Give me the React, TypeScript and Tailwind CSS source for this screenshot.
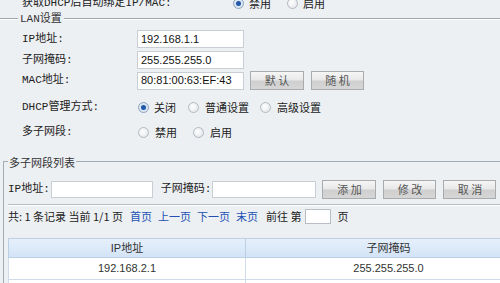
import React from "react";

const LBL = "font-['Liberation_Mono','Noto_Sans_CJK_SC',monospace]";
const SANS = "font-['Liberation_Sans','Noto_Sans_CJK_SC',sans-serif]";
const CJK = "font-['Noto_Sans_CJK_SC',sans-serif]";

function Radio({ checked }: { checked?: boolean }) {
  return checked ? (
    <span className="inline-flex w-[11px] h-[11px] shrink-0 items-center justify-center rounded-full border border-[#8ea3bd] bg-[#dbe6f3]">
      <span className="w-[5px] h-[5px] rounded-full bg-[#1f58a8]" />
    </span>
  ) : (
    <span className="inline-flex w-[11px] h-[11px] shrink-0 rounded-full border border-[#b3b9c0] bg-[radial-gradient(circle_at_40%_40%,#ffffff,#dde1e6)]" />
  );
}

function Btn({ children, w }: { children: React.ReactNode; w: string }) {
  return (
    <div
      className={`${w} h-[19px] shrink-0 flex items-center justify-center border border-[#a9abad] bg-[linear-gradient(#f6f6f6_0%,#e8e8e8_48%,#cfcfcf_52%,#d6d6d6_100%)] text-[11px] text-[#555] ${CJK}`}
    >
      {children}
    </div>
  );
}

function Input({ value, w, h }: { value?: string; w: string; h: string }) {
  return (
    <div
      className={`${w} ${h} shrink-0 flex items-center border border-[#c9ced4] bg-white px-[3px] text-[11px] text-[#111] ${SANS}`}
    >
      {value}
    </div>
  );
}

export default function App() {
  return (
    <div className="w-[500px] h-[283px] overflow-hidden bg-[#edf0f3] text-[#222]">
      {/* top row (clipped by the top edge as in the original) */}
      <div className={`-mt-[5px] h-[16px] flex items-center pl-[22px] text-[11px] ${LBL}`}>
        <span className="w-[211px] shrink-0 whitespace-nowrap">获取DHCP后自动绑定IP/MAC:</span>
        <Radio checked />
        <span className={`ml-[5px] w-[38px] shrink-0 ${CJK}`}>禁用</span>
        <Radio />
        <span className={`ml-[5px] ${CJK}`}>启用</span>
      </div>

      {/* LAN legend */}
      <div className="mt-[1px] h-[14px] flex items-center">
        <div className="w-[18px] h-[2px] border-t border-[#a0a7af] bg-white" />
        <span className={`px-[2px] text-[11px] text-[#333] ${LBL}`}>LAN设置</span>
        <div className="flex-1 h-[2px] border-t border-[#a0a7af] bg-white" />
      </div>

      {/* form rows */}
      <div className={`mt-[4px] h-[18px] flex items-center pl-[22px] text-[11px] ${LBL}`}>
        <span className="w-[115px] shrink-0">IP地址:</span>
        <Input value="192.168.1.1" w="w-[107px]" h="h-[18px]" />
      </div>
      <div className={`mt-[3px] h-[18px] flex items-center pl-[22px] text-[11px] ${LBL}`}>
        <span className="w-[115px] shrink-0">子网掩码:</span>
        <Input value="255.255.255.0" w="w-[107px]" h="h-[18px]" />
      </div>
      <div className={`mt-[2px] h-[19px] flex items-center pl-[22px] text-[11px] ${LBL}`}>
        <span className="w-[115px] shrink-0">MAC地址:</span>
        <Input value="80:81:00:63:EF:43" w="w-[107px]" h="h-[18px]" />
        <div className="ml-[6px]">
          <Btn w="w-[54px]">默 认</Btn>
        </div>
        <div className="ml-[7px]">
          <Btn w="w-[53px]">随 机</Btn>
        </div>
      </div>
      <div className={`mt-[7px] h-[20px] flex items-center pl-[22px] text-[11px] ${LBL}`}>
        <span className="w-[116px] shrink-0">DHCP管理方式:</span>
        <Radio checked />
        <span className={`ml-[5px] w-[34px] shrink-0 ${CJK}`}>关闭</span>
        <Radio />
        <span className={`ml-[6px] w-[55px] shrink-0 ${CJK}`}>普通设置</span>
        <Radio />
        <span className={`ml-[6px] ${CJK}`}>高级设置</span>
      </div>
      <div className={`mt-[5px] h-[20px] flex items-center pl-[22px] text-[11px] ${LBL}`}>
        <span className="w-[116px] shrink-0">多子网段:</span>
        <Radio />
        <span className={`ml-[6px] w-[38px] shrink-0 ${CJK}`}>禁用</span>
        <Radio />
        <span className={`ml-[6px] ${CJK}`}>启用</span>
      </div>

      {/* sub-network list group */}
      <div className="mt-[19px] ml-[3px] w-[570px] border-l border-t border-[#a3abb3] pl-[4px] pb-[20px]">
        <div className="-mt-[8px] h-[16px] flex">
          <span className={`px-[1px] bg-[#edf0f3] text-[11px] leading-[16px] text-[#333] ${CJK}`}>多子网段列表</span>
        </div>

        <div className={`mt-[10px] h-[19px] flex items-center text-[11px] whitespace-nowrap ${LBL}`}>
          <span className="shrink-0 mr-[1px]">IP地址:</span>
          <Input w="w-[102px]" h="h-[17px]" />
          <span className="ml-[8px] mr-[1px] shrink-0">子网掩码:</span>
          <Input w="w-[104px]" h="h-[17px]" />
          <div className="ml-[6px]">
            <Btn w="w-[54px]">添 加</Btn>
          </div>
          <div className="ml-[7px]">
            <Btn w="w-[53px]">修 改</Btn>
          </div>
          <div className="ml-[7px]">
            <Btn w="w-[53px]">取 消</Btn>
          </div>
        </div>

        <div className="mt-[5px] h-[2px] border-t border-[#b4bbc2] bg-white" />

        <div className={`mt-[2px] h-[16px] flex items-center text-[11px] text-[#222] whitespace-nowrap ${CJK}`}>
          <span>共: 1 条记录 当前 1/1 页</span>
          <span className="ml-[7px] text-[#2450b4]">首页</span>
          <span className="ml-[6px] text-[#2450b4]">上一页</span>
          <span className="ml-[6px] text-[#2450b4]">下一页</span>
          <span className="ml-[6px] text-[#2450b4]">末页</span>
          <span className="ml-[8px]">前往 第</span>
          <div className="ml-[4px] w-[26px] h-[15px] border border-[#b9bec4] bg-white" />
          <span className="ml-[6px]">页</span>
        </div>

        <table className={`mt-[14px] border-collapse text-[11px] text-[#333] ${SANS}`}>
          <thead>
            <tr className="h-[19px] bg-[linear-gradient(#e6f0fb,#d2e3f6)]">
              <th className="w-[237px] border border-[#bccfe3] font-normal p-0">IP地址</th>
              <th className="w-[286px] border border-[#bccfe3] font-normal p-0">子网掩码</th>
            </tr>
          </thead>
          <tbody>
            <tr className="h-[22px] bg-white">
              <td className="border border-[#cfdbe8] text-center p-0">192.168.2.1</td>
              <td className="border border-[#cfdbe8] text-center p-0">255.255.255.0</td>
            </tr>
            <tr className="h-[22px] bg-white">
              <td className="border border-[#cfdbe8] p-0" />
              <td className="border border-[#cfdbe8] p-0" />
            </tr>
          </tbody>
        </table>
      </div>
    </div>
  );
}
